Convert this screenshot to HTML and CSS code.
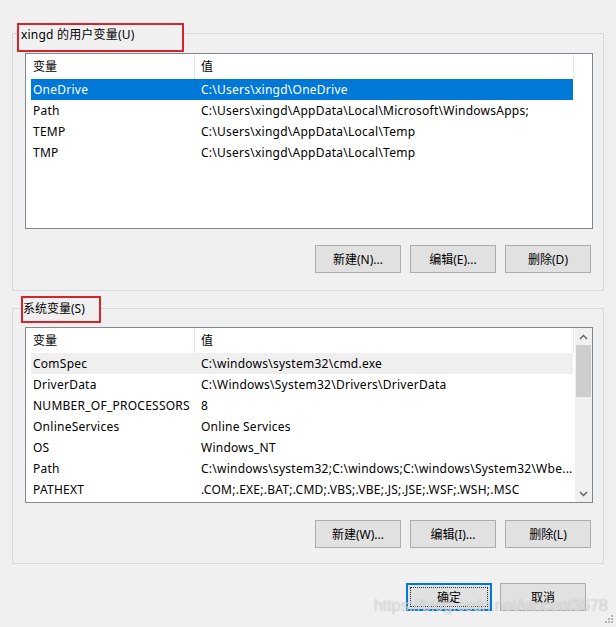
FILE: index.html
```html
<!DOCTYPE html>
<html lang="zh-CN">
<head>
<meta charset="utf-8">
<title>环境变量</title>
<link rel="stylesheet" href="styles.css">
</head>
<body>
<div class="dialog">
  <section class="group group-user">
    <div class="title title-user">xingd 的用户变量(U)</div>
    <div class="list">
      <div class="list-body">
        <div class="head">
          <div class="hcell hcell-name">变量</div>
          <div class="hcell hcell-value">值</div>
        </div>
        <div class="row selected"><span class="c1">OneDrive</span><span class="c2">C:\Users\xingd\OneDrive</span></div>
        <div class="row"><span class="c1">Path</span><span class="c2">C:\Users\xingd\AppData\Local\Microsoft\WindowsApps;</span></div>
        <div class="row"><span class="c1">TEMP</span><span class="c2">C:\Users\xingd\AppData\Local\Temp</span></div>
        <div class="row"><span class="c1">TMP</span><span class="c2">C:\Users\xingd\AppData\Local\Temp</span></div>
      </div>
    </div>
    <div class="buttons">
      <button class="btn">新建(N)...</button>
      <button class="btn">编辑(E)...</button>
      <button class="btn">删除(D)</button>
    </div>
  </section>

  <section class="group group-sys">
    <div class="title title-sys">系统变量(S)</div>
    <div class="list">
      <div class="list-body">
        <div class="head">
          <div class="hcell hcell-name">变量</div>
          <div class="hcell hcell-value">值</div>
        </div>
        <div class="row hover"><span class="c1">ComSpec</span><span class="c2">C:\windows\system32\cmd.exe</span></div>
        <div class="row"><span class="c1">DriverData</span><span class="c2">C:\Windows\System32\Drivers\DriverData</span></div>
        <div class="row"><span class="c1">NUMBER_OF_PROCESSORS</span><span class="c2">8</span></div>
        <div class="row"><span class="c1">OnlineServices</span><span class="c2">Online Services</span></div>
        <div class="row"><span class="c1">OS</span><span class="c2">Windows_NT</span></div>
        <div class="row"><span class="c1">Path</span><span class="c2">C:\windows\system32;C:\windows;C:\windows\System32\Wbe...</span></div>
        <div class="row"><span class="c1">PATHEXT</span><span class="c2">.COM;.EXE;.BAT;.CMD;.VBS;.VBE;.JS;.JSE;.WSF;.WSH;.MSC</span></div>
      </div>
      <div class="scrollbar">
        <div class="sb-arrow">
          <svg width="9" height="6" viewBox="0 0 9 6"><path d="M1 5 L4.5 1.5 L8 5" fill="none" stroke="#606060" stroke-width="1.4"/></svg>
        </div>
        <div class="sb-track"><div class="sb-thumb"></div></div>
        <div class="sb-arrow">
          <svg width="9" height="6" viewBox="0 0 9 6"><path d="M1 1 L4.5 4.5 L8 1" fill="none" stroke="#606060" stroke-width="1.4"/></svg>
        </div>
      </div>
    </div>
    <div class="buttons">
      <button class="btn">新建(W)...</button>
      <button class="btn">编辑(I)...</button>
      <button class="btn">删除(L)</button>
    </div>
  </section>

  <div class="footer">
    <button class="btn btn-default">确定</button>
    <button class="btn">取消</button>
  </div>

  <div class="watermark">https://blog.csdn.net/vincent3678</div>
  <svg class="grip" width="10" height="10" viewBox="0 0 10 10">
    <rect x="7" y="1" width="2" height="2" fill="#b5b5b5"/>
    <rect x="4" y="4" width="2" height="2" fill="#b5b5b5"/>
    <rect x="7" y="4" width="2" height="2" fill="#b5b5b5"/>
    <rect x="1" y="7" width="2" height="2" fill="#b5b5b5"/>
    <rect x="4" y="7" width="2" height="2" fill="#b5b5b5"/>
    <rect x="7" y="7" width="2" height="2" fill="#b5b5b5"/>
  </svg>
</div>
</body>
</html>
```

FILE: styles.css
```css
html, body {
  margin: 0;
  padding: 0;
  background: #f0f0f0;
}

body {
  font-family: "Noto Sans", "Noto Sans CJK SC", sans-serif;
  font-size: 12px;
  color: #000;
}

.dialog {
  position: relative;
  width: 616px;
  height: 627px;
  box-sizing: border-box;
  padding: 33px 12px 0 12px;
  display: flex;
  flex-direction: column;
  overflow: hidden;
}

.group {
  border: 1px solid #d9d9d9;
  display: flex;
  flex-direction: column;
}

.group-user {
  padding-bottom: 17px;
}

.group-sys {
  margin-top: 17px;
  padding-bottom: 15px;
}

.title {
  box-sizing: border-box;
  border: 2px solid #d8232c;
  background: #f0f0f0;
  white-space: nowrap;
}

.title-user {
  width: 167px;
  height: 29px;
  margin: -11px 0 1px 4px;
  padding-left: 2px;
  line-height: 20px;
  letter-spacing: 0.2px;
}

.title-sys {
  width: 80px;
  height: 27px;
  margin: -13px 0 4px 8px;
  padding-left: 0;
  line-height: 22px;
}

.list {
  margin: 0 10px 0 12px;
  height: 176px;
  box-sizing: border-box;
  border: 1px solid #828790;
  background: #fff;
  display: flex;
  overflow: hidden;
}

.list-body {
  flex: 1;
  display: flex;
  flex-direction: column;
}

.head {
  display: flex;
  height: 25px;
  flex: none;
}

.hcell {
  box-sizing: border-box;
  border-right: 1px solid #e5e5e5;
  line-height: 25px;
}

.hcell-name {
  width: 169px;
  padding-left: 7px;
}

.hcell-value {
  width: 379px;
  padding-left: 6px;
}

.row {
  display: flex;
  height: 21px;
  line-height: 21px;
  margin-left: 5px;
  width: 542px;
  white-space: nowrap;
  flex: none;
  letter-spacing: 0.25px;
  overflow: hidden;
}

.row .c1 {
  width: 163px;
  flex: none;
  padding-left: 2px;
  box-sizing: border-box;
}

.row .c2 {
  padding-left: 7px;
}

.row.selected {
  background: #0078d7;
  color: #fff;
}

.row.hover {
  background: #efefef;
}

.scrollbar {
  width: 17px;
  flex: none;
  background: #f0f0f0;
  display: flex;
  flex-direction: column;
}

.sb-arrow {
  height: 17px;
  display: flex;
  align-items: center;
  justify-content: center;
  flex: none;
}

.sb-track {
  flex: 1;
  display: flex;
  flex-direction: column;
}

.sb-thumb {
  height: 52px;
  margin: 0 1px;
  background: #cdcdcd;
}

.buttons {
  display: flex;
  justify-content: flex-end;
  gap: 9px;
  margin-top: 16px;
  padding-right: 12px;
}

.group-sys .buttons {
  margin-top: 17px;
}

.btn {
  width: 86px;
  height: 28px;
  box-sizing: border-box;
  border: 1px solid #adadad;
  background: #e1e1e1;
  font-family: "Noto Sans", "Noto Sans CJK SC", sans-serif;
  font-size: 12px;
  color: #000;
  padding: 0;
  margin: 0;
}

.footer {
  display: flex;
  justify-content: flex-end;
  gap: 8px;
  margin-top: 19px;
  padding-right: 18px;
}

.btn-default {
  border: 2px solid #0078d7;
  outline: 1px dotted #333;
  outline-offset: -5px;
}

.watermark {
  position: absolute;
  left: 374px;
  top: 597px;
  font-family: "Liberation Sans", Arial, sans-serif;
  font-size: 16px;
  color: rgba(255, 255, 255, 0.6);
  text-shadow: 0 0 1px rgba(110, 110, 110, 0.55);
  white-space: nowrap;
  pointer-events: none;
}

.grip {
  position: absolute;
  right: 2px;
  bottom: 3px;
}
```
